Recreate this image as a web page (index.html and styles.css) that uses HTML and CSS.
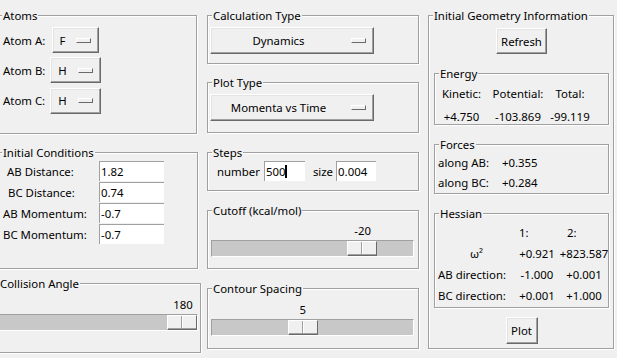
FILE: index.html
```html
<!DOCTYPE html>
<html lang="en">
<head>
<meta charset="utf-8">
<title>Reaction Dynamics</title>
<link rel="stylesheet" href="styles.css">
</head>
<body>
<div class="app">
  <div class="col col1">
    <fieldset class="group atoms">
      <legend>Atoms</legend>
      <div class="atom-grid">
        <span class="lbl">Atom A:</span><span class="menubtn small">F<i class="ind"></i></span>
        <span class="lbl">Atom B:</span><span class="menubtn small">H<i class="ind"></i></span>
        <span class="lbl">Atom C:</span><span class="menubtn small">H<i class="ind"></i></span>
      </div>
    </fieldset>

    <fieldset class="group init">
      <legend>Initial Conditions</legend>
      <div class="init-grid">
        <span class="lbl ind4">AB Distance:</span><span class="entry">1.82</span>
        <span class="lbl ind5">BC Distance:</span><span class="entry">0.74</span>
        <span class="lbl">AB Momentum:</span><span class="entry">-0.7</span>
        <span class="lbl">BC Momentum:</span><span class="entry">-0.7</span>
      </div>
    </fieldset>

    <fieldset class="group angle">
      <legend>Collision Angle</legend>
      <div class="scale angle-scale" style="--f:1">
        <div class="scale-val">180</div>
        <div class="trough"><div class="handle"></div></div>
      </div>
    </fieldset>
  </div>

  <div class="col col2">
    <fieldset class="group calc">
      <legend>Calculation Type</legend>
      <div class="calc-body">
        <span class="menubtn wide"><span class="mb-text">Dynamics</span><i class="ind"></i></span>
      </div>
    </fieldset>

    <fieldset class="group plot">
      <legend>Plot Type</legend>
      <div class="plot-body">
        <span class="menubtn wide"><span class="mb-text">Momenta vs Time</span><i class="ind"></i></span>
      </div>
    </fieldset>

    <fieldset class="group steps">
      <legend>Steps</legend>
      <div class="steps-body">
        <span class="lbl">number</span>
        <span class="entry num">500<span class="caret"></span></span>
        <span class="lbl size-lbl">size</span>
        <span class="entry sz">0.004</span>
      </div>
    </fieldset>

    <fieldset class="group cutoff">
      <legend>Cutoff (kcal/mol)</legend>
      <div class="scale cutoff-scale" style="--f:0.79">
        <div class="scale-val">-20</div>
        <div class="trough"><div class="handle"></div></div>
      </div>
    </fieldset>

    <fieldset class="group contour">
      <legend>Contour Spacing</legend>
      <div class="scale contour-scale" style="--f:0.444">
        <div class="scale-val">5</div>
        <div class="trough"><div class="handle"></div></div>
      </div>
    </fieldset>
  </div>

  <div class="col col3">
    <fieldset class="group geom">
      <legend>Initial Geometry Information</legend>
      <div class="geom-body">
        <span class="btn refresh">Refresh</span>

        <fieldset class="group energy">
          <legend>Energy</legend>
          <div class="energy-grid">
            <span>Kinetic:</span><span>Potential:</span><span>Total:</span>
            <span>+4.750</span><span>-103.869</span><span>-99.119</span>
          </div>
        </fieldset>

        <fieldset class="group forces">
          <legend>Forces</legend>
          <div class="forces-grid">
            <span>along AB:</span><span>+0.355</span>
            <span>along BC:</span><span>+0.284</span>
          </div>
        </fieldset>

        <fieldset class="group hessian">
          <legend>Hessian</legend>
          <div class="hess-grid">
            <span></span><span class="hd">1:</span><span class="hd hd2">2:</span>
            <span class="omega">ω²</span><span>+0.921</span><span>+823.587</span>
            <span class="rl">AB direction:</span><span>-1.000</span><span>+0.001</span>
            <span class="rl">BC direction:</span><span>+0.001</span><span>+1.000</span>
          </div>
        </fieldset>

        <span class="btn plotbtn">Plot</span>
      </div>
    </fieldset>
  </div>
</div>
</body>
</html>
```

FILE: styles.css
```css
* { box-sizing: border-box; }
html, body { margin: 0; background: #f0f0f0; }
body {
  font-family: "Noto Sans", "Open Sans", sans-serif;
  font-size: 11.4px;
  color: #000;
  width: 617px;
  height: 358px;
  overflow: hidden;
}

.app {
  display: flex;
  align-items: flex-start;
  margin-left: -3px;
  padding-top: 8px;
}
.col { display: flex; flex-direction: column; flex: none; }
.col1 { width: 201px; }
.col2 { width: 212px; margin-left: 9px; }
.col3 { width: 186px; margin-left: 9px; }

/* Tk-like groove label frames */
.group {
  margin: 0;
  padding: 0;
  min-width: 0;
  border: 1px solid #a0a0a0;
  box-shadow: inset 1px 1px 0 #fff, 1px 1px 0 #fff;
}
legend {
  margin-left: 4px;
  padding: 0 1px;
  line-height: 15px;
  background: #f0f0f0;
}

/* raised menubuttons */
.menubtn {
  display: inline-flex;
  align-items: center;
  height: 26px;
  padding: 0 7px;
  border: 1px solid;
  border-color: #fff #696969 #696969 #fff;
  box-shadow: inset -1px -1px 0 #a0a0a0, inset 1px 1px 0 #e3e3e3;
  background: #f0f0f0;
}
.menubtn.small { justify-self: center; gap: 11px; }
.menubtn.wide { width: 164px; height: 27px; padding: 0 7px 0 2px; }
.mb-text { flex: 1; text-align: center; }
.menubtn.wide .ind { margin-left: 7px; }
.ind {
  display: block;
  flex: none;
  width: 15px;
  height: 5px;
  border: 1px solid;
  border-color: #fff #696969 #696969 #fff;
  background: #f0f0f0;
}

/* push buttons */
.btn {
  align-self: center;
  display: inline-flex;
  align-items: center;
  justify-content: center;
  padding: 0 4px;
  border: 1px solid;
  border-color: #fff #696969 #696969 #fff;
  box-shadow: inset -1px -1px 0 #a0a0a0, inset 1px 1px 0 #e3e3e3;
  background: #f0f0f0;
}
.refresh { height: 26px; width: 51px; }
.plotbtn { height: 27px; width: 32px; margin-top: 9px; }

/* entries */
.entry {
  display: flex;
  align-items: center;
  height: 20px;
  padding-left: 1px;
  background: #fff;
  border-top: 1px solid #a0a0a0;
  border-left: 1px solid #a0a0a0;
  white-space: nowrap;
}
.caret {
  display: inline-block;
  width: 2px;
  height: 13px;
  background: #000;
}

/* Atoms */
.atoms { margin-right: 1px; }
.atom-grid {
  display: grid;
  grid-template-columns: 47px 51px;
  grid-template-rows: 26px 26px 27px;
  row-gap: 4px;
  align-items: center;
  padding: 4px 0 19px 5px;
}

/* Initial conditions */
.init { margin-top: 11px; }
.init-grid {
  display: grid;
  grid-template-columns: 96px 65px;
  grid-auto-rows: 20px;
  row-gap: 1px;
  align-items: center;
  padding: 1px 0 24px 5px;
}
.ind4 { padding-left: 4px; }
.ind5 { padding-left: 5px; }

/* Scales */
.scale-val {
  height: 18px;
  line-height: 18px;
  width: 30px;
  margin-left: calc(var(--f) * (100% - 30px));
  text-align: center;
}
.trough {
  height: 17px;
  border: 1px solid;
  border-color: #a0a0a0 #fff #fff #a0a0a0;
  background: #c8c8c8;
}
.handle {
  width: 30px;
  height: 15px;
  margin-left: calc(var(--f) * (100% - 30px));
  border: 1px solid;
  border-color: #fff #696969 #696969 #fff;
  box-shadow: inset 0 -1px 0 #a0a0a0;
  background:
    linear-gradient(to right, transparent 13px, #a0a0a0 13px, #a0a0a0 14px, #fff 14px, #fff 15px, transparent 15px),
    #f0f0f0;
}
.angle { margin-top: 7px; margin-left: -3px; margin-right: -3px; }
.angle-scale { padding: 5px 2px 21px 3px; }
.cutoff { margin-top: 12px; }
.cutoff-scale { padding: 4px 4px 11px 3px; }
.contour { margin-top: 12px; }
.contour-scale { padding: 5px 4px 12px 3px; }

/* Middle column */
.calc-body { padding: 4px 0 9px 2px; }
.plot { margin-top: 11px; }
.plot-body { padding: 4px 0 11px 2px; }
.steps { margin-top: 12px; }
.steps-body {
  display: flex;
  align-items: center;
  padding: 1px 0 9px 9px;
}
.entry.num { width: 41px; margin-left: 4px; }
.size-lbl { margin-left: 8px; }
.entry.sz { width: 40px; margin-left: 3px; }

/* Right column */
.geom-body {
  display: flex;
  flex-direction: column;
  padding: 5px 4px 4px 5px;
}
.energy, .forces, .hessian { margin-top: 12px; }
.energy-grid {
  display: grid;
  grid-template-columns: 49px 64px 40px;
  row-gap: 9px;
  justify-items: center;
  line-height: 14px;
  padding: 6px 0 0 2px;
  white-space: nowrap;
}
.forces-grid {
  display: grid;
  grid-template-columns: 64px auto;
  row-gap: 6px;
  line-height: 14px;
  padding: 4px 0 3px 3px;
}
.hess-grid {
  display: grid;
  grid-template-columns: 77px 36px 50px;
  column-gap: 4px;
  row-gap: 7px;
  justify-items: center;
  line-height: 14px;
  padding: 5px 0 4px 3px;
  white-space: nowrap;
}
.hess-grid .hd { justify-self: start; }
.hess-grid .hd2 { padding-left: 8px; }
.hess-grid .rl { justify-self: start; }
```
